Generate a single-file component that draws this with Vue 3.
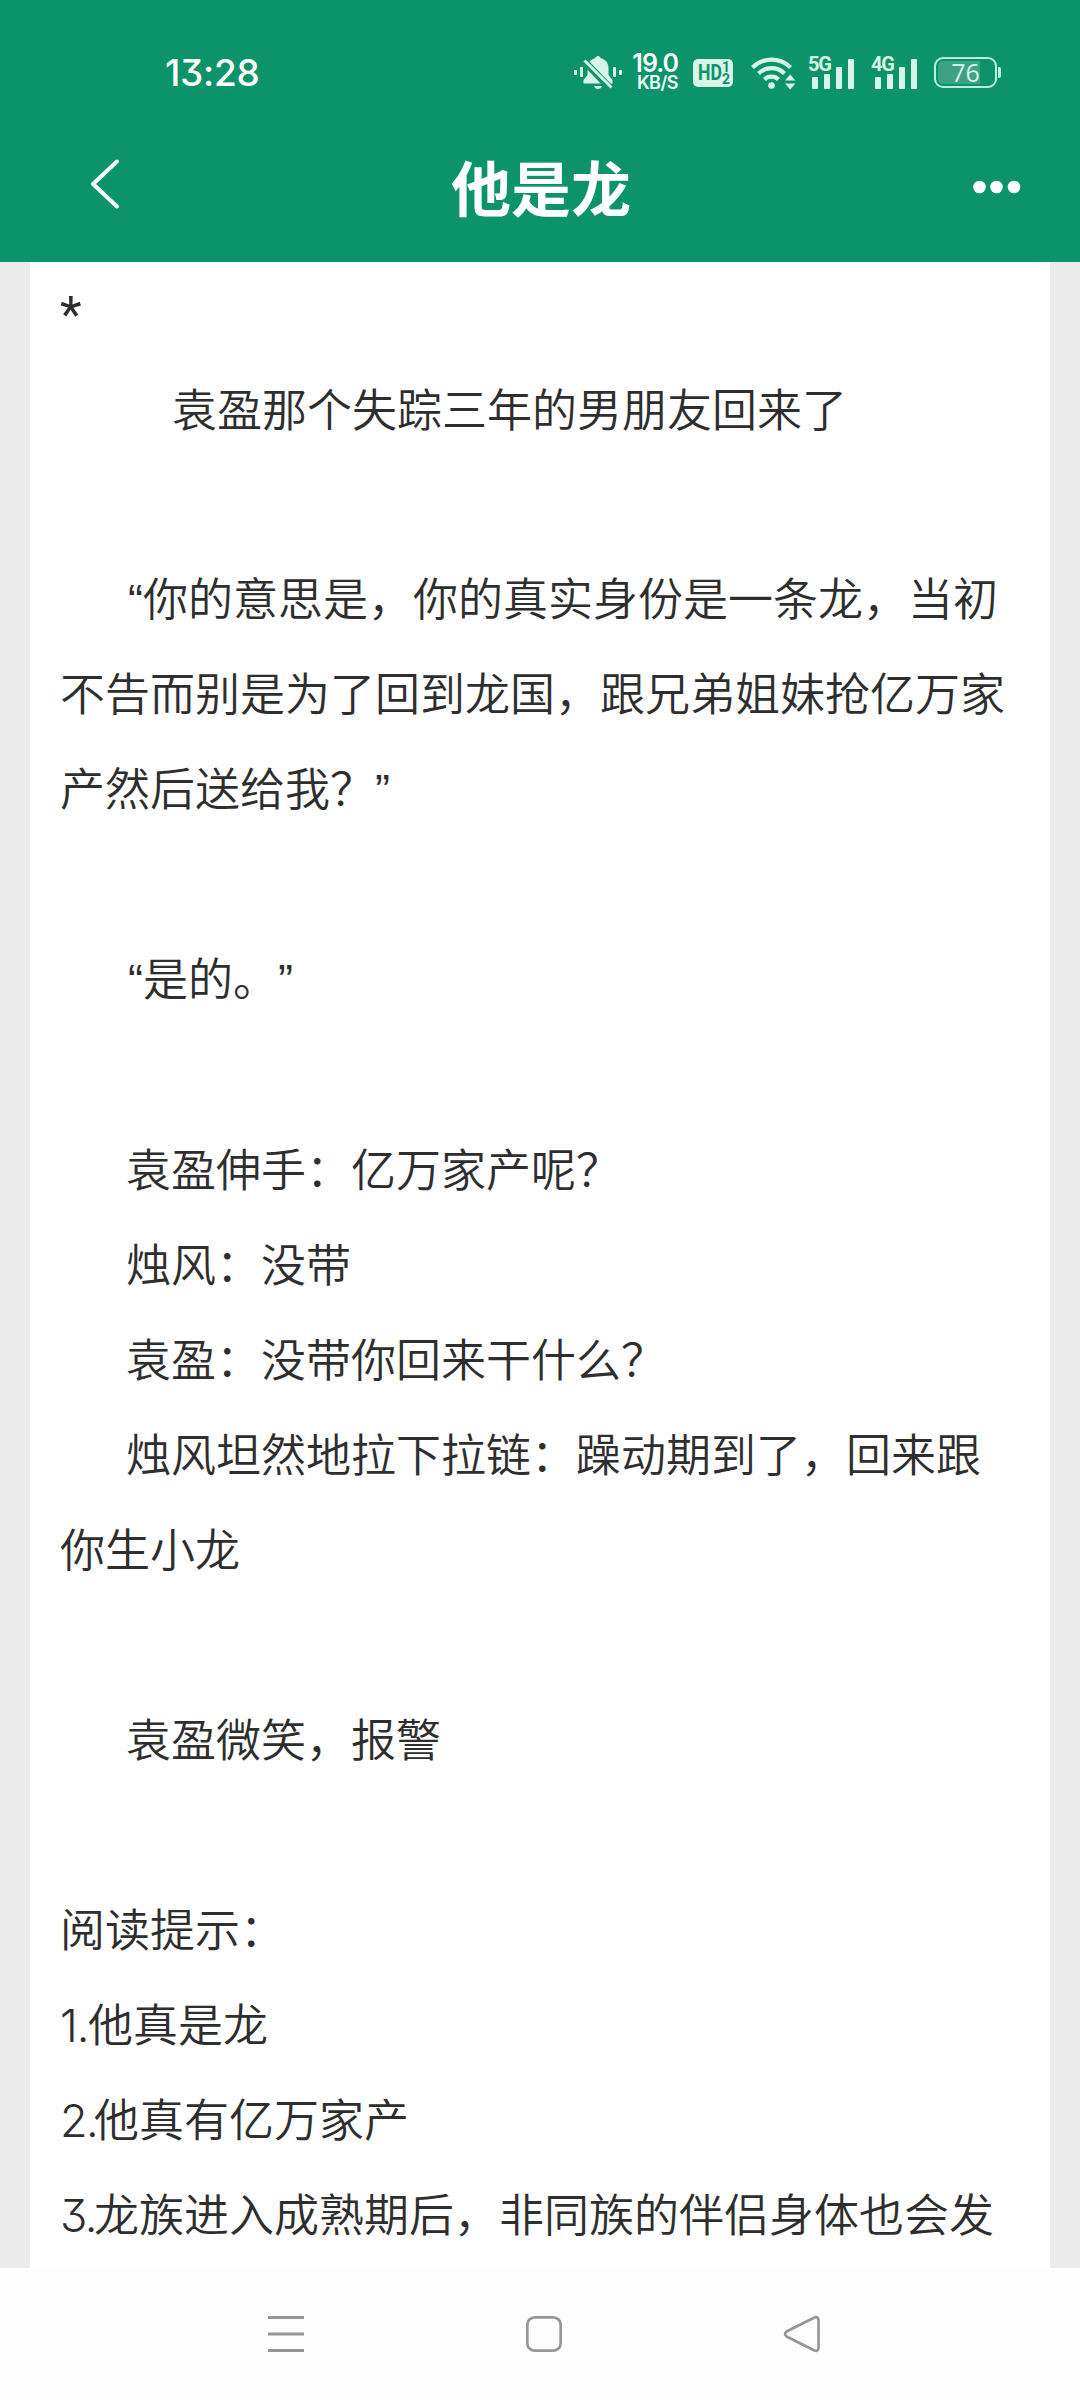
<script setup>
  import { ref } from 'vue';

  const title = ref('他是龙');

  // gap: blank line above, indent: first line offset
  const lines = [
    { text: '*', indent: 'star' },
    { text: '袁盈那个失踪三年的男朋友回来了', indent: 'deep' },
    { text: '“你的意思是，你的真实身份是一条龙，当初不告而别是为了回到龙国，跟兄弟姐妹抢亿万家产然后送给我？”', indent: 'quote', gap: true },
    { text: '“是的。”', indent: 'quote', gap: true },
    { text: '袁盈伸手：亿万家产呢？', indent: 'normal', gap: true },
    { text: '烛风：没带', indent: 'normal' },
    { text: '袁盈：没带你回来干什么？', indent: 'normal' },
    { text: '烛风坦然地拉下拉链：躁动期到了，回来跟你生小龙', indent: 'normal' },
    { text: '袁盈微笑，报警', indent: 'normal', gap: true },
    { text: '阅读提示：', gap: true },
    { num: '1.', text: '他真是龙' },
    { num: '2.', text: '他真有亿万家产' },
    { num: '3.', text: '龙族进入成熟期后，非同族的伴侣身体也会发' },
  ];

  const networks = ['5G', '4G'];
</script>

<template>
  <div class="screen">
    <header>
      <div class="status">
        <span class="time">13:28</span>
        <div class="status-icons">
          <svg class="bell" width="50" height="36" viewBox="0 0 50 36">
            <g fill="#d8f3e8">
              <rect x="1" y="15" width="3" height="5" rx="1" />
              <rect x="7" y="12" width="3" height="10" rx="1" />
              <rect x="40" y="12" width="3" height="10" rx="1" />
              <rect x="46" y="15" width="3" height="5" rx="1" />
              <path d="M25 1c1.500 0 2.500 1 2.800 2.300C33 4.500 35.500 8.500 35.500 13v7l4 5v3.500h-29V25l4-5v-7c0-4.500 2.500-8.500 7.700-9.700C22.500 2 23.500 1 25 1z" />
              <path d="M21 31h8c-.7 2-2 3-4 3s-3.300-1-4-3z" />
            </g>
            <path d="M9.500 4.500 36 32" stroke="#0d936a" stroke-width="7" />
            <path d="M11.500 5.500 38.500 32.500" stroke="#d8f3e8" stroke-width="3" />
          </svg>
          <div class="speed">
            <b>19.0</b>
            <small>KB/S</small>
          </div>
          <div class="hd"><span>HD</span><i><em>1</em><em>2</em></i></div>
          <svg class="wifi" width="46" height="36" viewBox="0 0 46 36">
            <g fill="none" stroke="#d8f3e8" stroke-width="4.200">
              <path d="M1.500 12.500a27 27 0 0 1 38 0" />
              <path d="M7.500 18.500a18.500 18.500 0 0 1 26 0" />
              <path d="M13.500 24.500a10 10 0 0 1 14 0" />
            </g>
            <circle cx="20.500" cy="30.500" r="3.300" fill="#d8f3e8" />
            <path d="M34 25.500l5.200-6 5.200 6zM34 28.500l5.200 6 5.200-6z" fill="#d8f3e8" />
          </svg>
          <div v-for="net in networks" :key="net" class="signal">
            <span>{{ net }}</span>
            <svg width="44" height="31" viewBox="0 0 44 31" fill="#d8f3e8">
              <rect x="1" y="18" width="6" height="12" rx="1" />
              <rect x="13" y="15" width="6" height="15" rx="1" />
              <rect x="25" y="8" width="6" height="22" rx="1" />
              <rect x="37" y="0" width="6" height="30" rx="1" />
            </svg>
          </div>
          <div class="battery"><span>76</span></div>
        </div>
      </div>
      <div class="titlebar">
        <svg class="back" width="32" height="54" viewBox="0 0 32 54">
          <path d="M28 3.500 4 26l24 22.500" fill="none" stroke="#fff" stroke-width="4" stroke-linecap="round" stroke-linejoin="round" />
        </svg>
        <h1>{{ title }}</h1>
        <svg class="more" width="48" height="18" viewBox="0 0 48 18" fill="#fff">
          <circle cx="6.500" cy="11" r="6.300" />
          <circle cx="23.500" cy="11" r="6.300" />
          <circle cx="41" cy="11" r="6.300" />
        </svg>
      </div>
    </header>

    <main>
      <article>
        <p v-for="(line, i) in lines" :key="i" :class="[line.indent, { gap: line.gap }]">
          <span v-if="line.num" class="num" :class="{ one: line.num === '1.' }">{{ line.num }}</span>{{ line.text }}
        </p>
      </article>
    </main>

    <nav>
      <svg width="38" height="38" viewBox="0 0 38 38" stroke="#969696" stroke-width="3">
        <path d="M1 2.500h36M1 19h36M1 35.500h36" />
      </svg>
      <svg width="38" height="38" viewBox="0 0 38 38" fill="none" stroke="#969696" stroke-width="2.700">
        <rect x="2.300" y="2.300" width="33.400" height="33.400" rx="7.500" />
      </svg>
      <svg width="38" height="38" viewBox="0 0 38 38" fill="none" stroke="#969696" stroke-width="2.700" stroke-linejoin="round">
        <path d="M3.500 16.500 31 2.700Q35.300 1 35.500 5v28q-.2 4-4.500 2.300L3.500 21.500Q.6 19 3.500 16.500z" />
      </svg>
    </nav>
  </div>
</template>

<style>
  body { margin: 0; background-color: #fdfdfd }
</style>

<style scoped>
  .screen {
    display: flex;
    flex-direction: column;
    width: 1080px;
    height: 2400px;
    overflow: hidden;
    font-family: Inter, "Noto Sans CJK SC", sans-serif;
  }
  header {
    flex: none;
    height: 262px;
    background-color: #0d936a;
    color: #fff;
  }
  .status {
    display: flex;
    justify-content: space-between;
    align-items: center;
    box-sizing: border-box;
    height: 145px;
    padding: 0 79px 0 165px;
  }
  .time {
    font-size: 37px;
    font-weight: 500;
    letter-spacing: -0.3px;
    font-feature-settings: "cv09";
  }
  .status-icons {
    display: flex;
    align-items: center;
    color: #d8f3e8;
  }
  .speed {
    display: flex;
    flex-direction: column;
    align-items: flex-end;
    width: 46px;
    margin: 0 15px 0 9px;
    color: #f0fdf8;
  }
  .speed b {
    font-size: 25px;
    line-height: 21px;
    font-weight: 600;
    letter-spacing: -1px;
  }
  .speed small {
    font-size: 18px;
    line-height: 18px;
    font-weight: 600;
    letter-spacing: -0.5px;
  }
  .hd {
    display: flex;
    align-items: center;
    box-sizing: border-box;
    width: 40px;
    height: 28px;
    padding-left: 5px;
    border-radius: 5px;
    background-color: #d8f3e8;
    color: #0d936a;
    font-family: Roboto, sans-serif;
    font-size: 22px;
    font-weight: 700;
  }
  .hd span {
    width: 24px;
    transform: scaleX(0.8);
    transform-origin: left;
  }
  .hd i {
    display: flex;
    flex-direction: column;
    font-size: 14px;
    font-style: normal;
    line-height: 12px;
  }
  .hd em { font-style: normal }
  .wifi { margin: 0 11px 0 18px }
  .signal {
    position: relative;
    width: 46px;
    height: 34px;
    margin-right: 17px;
  }
  .signal span {
    position: absolute;
    top: -2px;
    left: 0;
    font-family: Roboto, sans-serif;
    font-size: 20px;
    line-height: 20px;
    font-weight: 700;
    letter-spacing: -1.2px;
  }
  .signal svg {
    display: block;
    margin: 3px 0 0 3px;
  }
  .battery {
    position: relative;
    box-sizing: border-box;
    width: 63px;
    height: 31px;
    margin-right: 4px;
    border: 2px solid #b9f0da;
    border-radius: 9px;
    background: linear-gradient(90deg, #3da283 76%, #0d936a 76%) content-box;
    padding: 2px;
    font-family: "Open Sans", sans-serif;
    font-size: 25px;
    line-height: 23px;
    text-align: center;
  }
  .battery::after {
    content: "";
    position: absolute;
    top: 8px;
    right: -6px;
    width: 3px;
    height: 11px;
    border-radius: 0 2px 2px 0;
    background-color: #b9f0da;
  }
  .titlebar {
    display: flex;
    justify-content: space-between;
    align-items: center;
    height: 80px;
    padding: 0 59px 0 89px;
  }
  h1 {
    margin: 10px 12px 0 0;
    font-size: 60px;
    line-height: 80px;
    font-weight: 700;
  }
  main {
    flex: none;
    box-sizing: border-box;
    height: 2006px;
    padding: 0 30px;
    background-color: #ebebeb;
    overflow: hidden;
  }
  article {
    height: 2006px;
    box-sizing: border-box;
    padding: 6px 30px 0;
    background-color: #fefefe;
    color: #2e2e2e;
    text-spacing-trim: space-all;
  }
  p {
    margin: 0;
    font-size: 45px;
    line-height: 95px;
    font-weight: 350;
  }
  .gap { margin-top: 95px }
  .normal { text-indent: 66px }
  .deep { text-indent: 112px }
  .quote {
    font-family: "Liberation Sans", "Noto Sans CJK SC", sans-serif;
    text-indent: 68px;
  }
  .star {
    font-family: Roboto, sans-serif;
    font-size: 50px;
    font-weight: 400;
  }
  .num {
    display: inline-block;
    width: 34px;
    line-height: 1;
    font-weight: 300;
    letter-spacing: -1.5px;
    font-feature-settings: "cv09";
  }
  .one { width: 28px; letter-spacing: -1px }
  nav {
    flex: 1;
    display: flex;
    justify-content: space-between;
    align-items: center;
    padding: 0 259px 0 267px;
    background-color: #fdfdfd;
  }
</style>
